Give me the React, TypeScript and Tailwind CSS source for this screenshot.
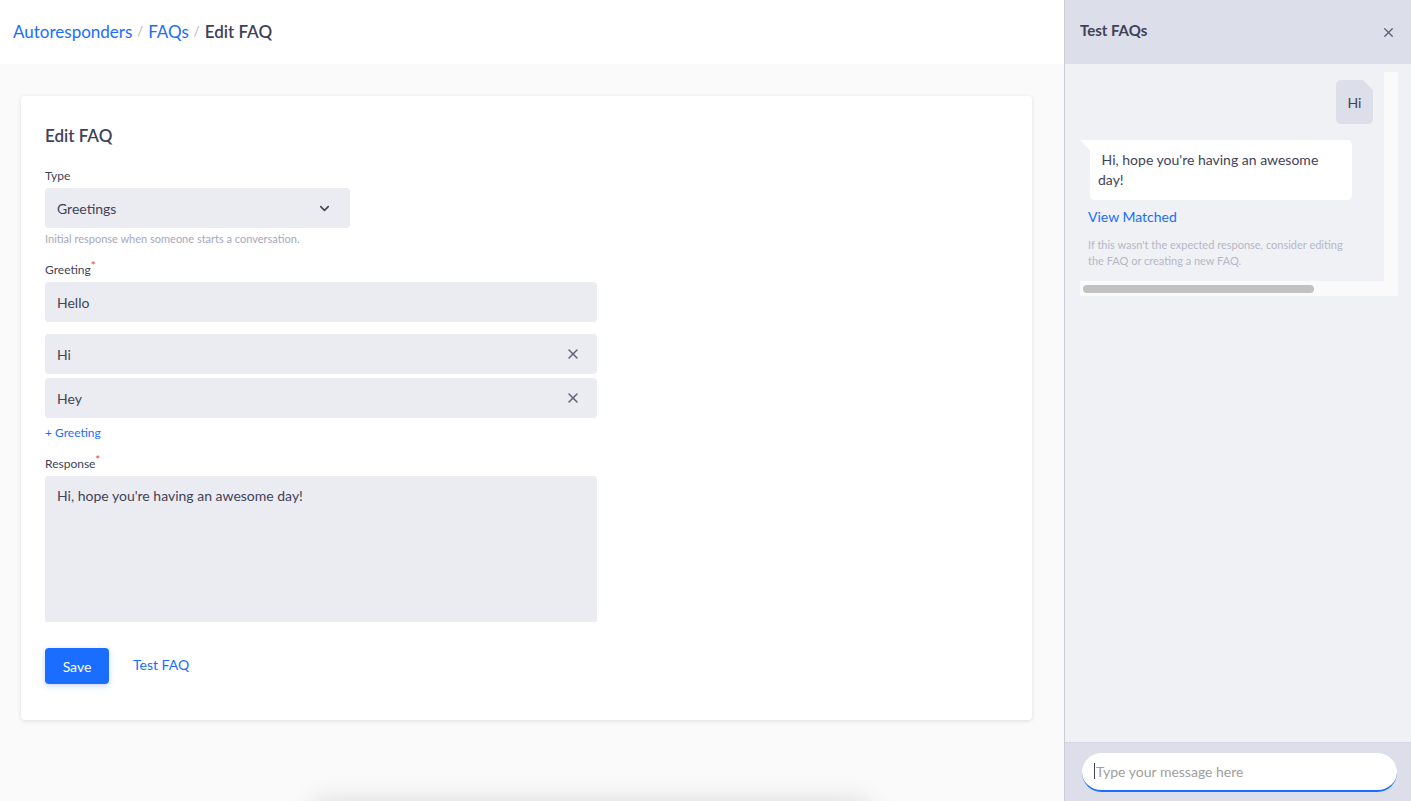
import { ChevronDown, X } from 'lucide-react';

const font = { fontFamily: 'Lato, "Open Sans", sans-serif' };

function Label({ text, required }: { text: string; required?: boolean }) {
  return (
    <div className="mb-[5px] text-[12px] leading-[14px] text-[#3f4259]">
      {text}
      {required && <span className="relative -top-[4px] text-[#f04438]">*</span>}
    </div>
  );
}

function GreetingRow({ value, removable }: { value: string; removable?: boolean }) {
  return (
    <div className="flex h-[40px] w-[552px] items-center justify-between rounded-[4px] bg-[#ebecf1] pl-[12px] pr-[16px] text-[14px] text-[#3f4259]">
      <span>{value}</span>
      {removable && <X className="h-[16px] w-[16px] text-[#5c5f78]" strokeWidth={2.2} />}
    </div>
  );
}

export default function App() {
  return (
    <div className="flex h-screen w-full overflow-hidden bg-[#fafafa]" style={font}>
      <main className="flex min-w-0 flex-1 flex-col">
        <header className="flex h-[64px] shrink-0 items-center bg-white pl-[13px] text-[17px]">
          <span className="text-[#1a6dff]">Autoresponders</span>
          <span className="mx-[5px] text-[13px] text-[#b0b2c3]">/</span>
          <span className="text-[#1a6dff]">FAQs</span>
          <span className="mx-[5px] text-[13px] text-[#b0b2c3]">/</span>
          <span className="font-semibold text-[#3f4259]">Edit FAQ</span>
        </header>

        <div className="shrink-0 px-[21px] pt-[32px]">
          <section className="w-[1011px] rounded-[4px] bg-white px-[24px] pb-[36px] pt-[28px] shadow-[0_1px_4px_rgba(0,0,0,0.12)]">
            <h1 className="mb-[21px] text-[17px] font-semibold leading-[24px] text-[#3f4259]">Edit FAQ</h1>

            <Label text="Type" />
            <div className="flex h-[40px] w-[305px] items-center justify-between rounded-[4px] bg-[#ebecf1] pl-[12px] pr-[18px] text-[14px] text-[#3f4259]">
              <span>Greetings</span>
              <ChevronDown className="h-[15px] w-[15px] text-[#3f4259]" strokeWidth={2.5} />
            </div>
            <p className="mt-[4px] text-[11px] leading-[13px] text-[#a6a8bd]">
              Initial response when someone starts a conversation.
            </p>

            <div className="mt-[18px]">
              <Label text="Greeting" required />
              <GreetingRow value="Hello" />
              <div className="mt-[12px] flex flex-col gap-[4px]">
                <GreetingRow value="Hi" removable />
                <GreetingRow value="Hey" removable />
              </div>
              <div className="mt-[8px] text-[12px] leading-[14px] text-[#1a6dff]">+ Greeting</div>
            </div>

            <div className="mt-[17px]">
              <Label text="Response" required />
              <div className="h-[146px] w-[552px] rounded-t-[4px] bg-[#ebecf1] px-[12px] pt-[10px] text-[14px] leading-[20px] text-[#3f4259]">
                Hi, hope you're having an awesome day!
              </div>
            </div>

            <div className="mt-[26px] flex items-center gap-[24px]">
              <button className="h-[36px] w-[64px] rounded-[4px] bg-[#1a6dff] text-[14px] text-white shadow-[0_2px_6px_rgba(26,109,255,0.25)]">
                Save
              </button>
              <span className="-mt-[4px] text-[14px] text-[#1a6dff]">Test FAQ</span>
            </div>
          </section>
          <div className="ml-[290px] mt-[81px] h-[40px] w-[560px] shrink-0 rounded-[10px] bg-[#fafafa] shadow-[0_0_26px_rgba(0,0,0,0.13)]" />
        </div>
      </main>

      <aside className="flex w-[347px] shrink-0 flex-col border-l border-[#c9cbd8] bg-[#f0f1f5]">
        <div className="flex h-[64px] shrink-0 items-center justify-between bg-[#dcdee9] pl-[15px] pr-[15px]">
          <span className="-mt-[3px] text-[15px] font-bold text-[#3f4259]">Test FAQs</span>
          <X className="h-[15px] w-[15px] text-[#5c5f78]" strokeWidth={2.2} />
        </div>

        <div className="flex-1 pl-[15px] pr-[13px] pt-[8px]">
          <div className="flex w-[318px] flex-col">
            <div className="flex">
              <div className="flex-1 pt-[8px]">
                <div className="flex justify-end pr-[11px]">
                  <div className="relative flex h-[44px] w-[37px] items-center justify-center rounded-[5px] rounded-tr-none bg-[#dcdee9] text-[14px] text-[#3f4259]">
                    Hi
                    <span className="absolute right-0 top-0 h-0 w-0 border-l-[10px] border-t-[10px] border-l-transparent border-t-[#f0f1f5]" />
                  </div>
                </div>

                <div className="relative ml-[10px] mt-[16px] w-[262px] rounded-[5px] rounded-tl-none bg-white py-[10px] pl-[8px] pr-[12px] text-[14px] leading-[20px] text-[#3f4259]">
                  <span className="absolute -left-[10px] top-0 h-0 w-0 border-l-[10px] border-t-[10px] border-l-transparent border-t-white" />
                  &nbsp;Hi, hope you're having an awesome day!
                </div>
                <div className="ml-[8px] mt-[6px] text-[14px] text-[#1a6dff]">View Matched</div>
                <p className="ml-[8px] mt-[10px] pr-[30px] text-[11px] leading-[16px] text-[#b5b7c7]">
                  If this wasn't the expected response, consider editing the FAQ or creating a new FAQ.
                </p>
                <div className="h-[12px]" />
              </div>
              <div className="w-[14px] bg-[#fafafa]" />
            </div>
            <div className="flex h-[15px] items-center bg-[#fafafa] px-[3px]">
              <div className="h-[8px] w-[231px] rounded-full bg-[#c1c1c1]" />
            </div>
          </div>
        </div>

        <div className="flex h-[59px] shrink-0 items-center border-t border-[#d3d5e0] bg-[#dcdee9] pl-[17px] pr-[14px]">
          <div className="flex h-[39px] w-full items-center rounded-full border-b-2 border-[#1a6dff] bg-white pl-[12px] text-[14px] text-[#a0a0a0]">
            <span className="mr-[1px] h-[16px] w-[1px] bg-[#3f4259]" />
            Type your message here
          </div>
        </div>
      </aside>
    </div>
  );
}
